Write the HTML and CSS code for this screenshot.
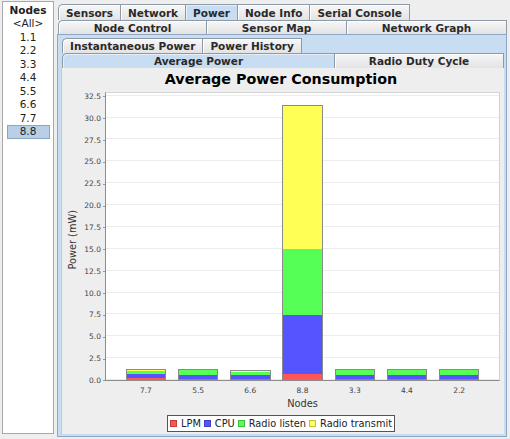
FILE: index.html
```html
<!DOCTYPE html>
<html lang="en">
<head>
<meta charset="utf-8">
<title>Average Power</title>
<link rel="stylesheet" href="styles.css">
</head>
<body>
<div class="app">
  <aside class="nodes">
    <div class="nodes-title">Nodes</div>
    <ul class="node-list">
      <li>&lt;All&gt;</li>
      <li>1.1</li>
      <li>2.2</li>
      <li>3.3</li>
      <li>4.4</li>
      <li>5.5</li>
      <li>6.6</li>
      <li>7.7</li>
      <li class="sel">8.8</li>
    </ul>
  </aside>

  <main class="tabs outer">
    <div class="tab-row r1">
      <div class="tab first">Sensors</div>
      <div class="tab">Network</div>
      <div class="tab sel">Power</div>
      <div class="tab">Node Info</div>
      <div class="tab">Serial Console</div>
    </div>
    <div class="tab-row r2 stretch">
      <div class="tab first">Node Control</div>
      <div class="tab">Sensor Map</div>
      <div class="tab">Network Graph</div>
    </div>

    <div class="outer-content">
      <div class="tab-row ir1">
        <div class="tab first">Instantaneous Power</div>
        <div class="tab">Power History</div>
      </div>
      <div class="tab-row ir2">
        <div class="tab first sel w-avg">Average Power</div>
        <div class="tab grow">Radio Duty Cycle</div>
      </div>

      <section class="chart">
        <h1 class="chart-title">Average Power Consumption</h1>
        <div class="chart-main">
          <div class="y-title"><span>Power (mW)</span></div>
          <div class="y-ticks">
            <span>0.0</span><span>2.5</span><span>5.0</span><span>7.5</span><span>10.0</span>
            <span>12.5</span><span>15.0</span><span>17.5</span><span>20.0</span><span>22.5</span>
            <span>25.0</span><span>27.5</span><span>30.0</span><span>32.5</span>
          </div>
          <div class="plot">
            <div class="bar">
              <i class="lpm" style="--v:0.23"></i><i class="cpu" style="--v:0.46"></i><i class="listen" style="--v:0.29"></i><i class="transmit" style="--v:0.29"></i>
            </div>
            <div class="bar">
              <i class="lpm" style="--v:0.17"></i><i class="cpu" style="--v:0.46"></i><i class="listen" style="--v:0.51"></i><i class="transmit" style="--v:0.11"></i>
            </div>
            <div class="bar">
              <i class="lpm" style="--v:0.17"></i><i class="cpu" style="--v:0.40"></i><i class="listen" style="--v:0.34"></i><i class="transmit" style="--v:0.23"></i>
            </div>
            <div class="bar">
              <i class="lpm" style="--v:0.69"></i><i class="cpu" style="--v:6.75"></i><i class="listen" style="--v:7.55"></i><i class="transmit" style="--v:16.47"></i>
            </div>
            <div class="bar">
              <i class="lpm" style="--v:0.17"></i><i class="cpu" style="--v:0.46"></i><i class="listen" style="--v:0.57"></i><i class="transmit" style="--v:0.06"></i>
            </div>
            <div class="bar">
              <i class="lpm" style="--v:0.17"></i><i class="cpu" style="--v:0.46"></i><i class="listen" style="--v:0.57"></i><i class="transmit" style="--v:0.06"></i>
            </div>
            <div class="bar">
              <i class="lpm" style="--v:0.17"></i><i class="cpu" style="--v:0.46"></i><i class="listen" style="--v:0.57"></i><i class="transmit" style="--v:0.06"></i>
            </div>
          </div>
        </div>
        <div class="x-labels">
          <span>7.7</span><span>5.5</span><span>6.6</span><span>8.8</span><span>3.3</span><span>4.4</span><span>2.2</span>
        </div>
        <div class="x-title">Nodes</div>
        <div class="legend">
          <span class="item"><b class="lpm"></b>LPM</span>
          <span class="item"><b class="cpu"></b>CPU</span>
          <span class="item"><b class="listen"></b>Radio listen</span>
          <span class="item"><b class="transmit"></b>Radio transmit</span>
        </div>
      </section>
    </div>
  </main>
</div>
</body>
</html>
```

FILE: styles.css
```css
* { box-sizing: border-box; margin: 0; padding: 0; }

html, body { width: 510px; height: 439px; overflow: hidden; }

body {
  background: #eeeeee;
  font-family: "DejaVu Sans", "Noto Sans", sans-serif;
  color: #222;
}

.app { display: flex; height: 439px; }

/* ---------- node list ---------- */
.nodes {
  width: 52px;
  margin: 1px 0 5px 2px;
  background: #fff;
  border: 1px solid #a9a9a9;
  display: flex;
  flex-direction: column;
  align-items: center;
}
.nodes-title {
  font-weight: bold;
  font-size: 10.5px;
  line-height: 14px;
  margin-top: 1px;
}
.node-list {
  list-style: none;
  width: 100%;
  display: flex;
  flex-direction: column;
  align-items: center;
}
.node-list li {
  font-size: 10.5px;
  line-height: 13.5px;
  width: 43px;
  text-align: center;
}
.node-list li.sel {
  background: #b8cfe5;
  box-shadow: inset 0 0 0 1px #8ea5c0;
}

/* ---------- tabs ---------- */
.outer {
  flex: 1;
  margin: 4px 3px 2px 3px;
  display: flex;
  flex-direction: column;
}
.tab-row { display: flex; padding-left: 1px; flex: none; }
.r1 { height: 16px; }
.r2 { height: 14px; }
.ir1, .ir2 { height: 15px; }

.tab {
  font-size: 10.5px;
  font-weight: bold;
  color: #2a2a2a;
  padding: 0 7px;
  border: 1px solid #8d9aa7;
  border-bottom: none;
  border-right: none;
  background: linear-gradient(#f7f7f7, #e3e3e3);
  box-shadow: inset 1px 1px 0 #ffffff;
  display: flex;
  align-items: center;
  justify-content: center;
  white-space: nowrap;
}
.tab:last-child { border-right: 1px solid #8d9aa7; }
.tab.first { border-top-left-radius: 5px; }
.tab.sel { background: #c8ddf2; box-shadow: inset 1px 1px 0 #e4effa; }
.stretch .tab { flex: 1 1 auto; }
.w-avg { flex: 0 0 272px; }
.grow { flex: 1 1 auto; }

.outer-content {
  flex: 1;
  background: #c8ddf2;
  border: 1px solid #8fa6c4;
  padding: 3px 2px 2px 3px;
  display: flex;
  flex-direction: column;
  min-height: 0;
}

/* ---------- chart ---------- */
.chart {
  flex: 1;
  background: #eeeeee;
  border-left: 1px solid #b9cbe0;
  display: flex;
  flex-direction: column;
  padding-right: 4px;
}
.chart-title {
  height: 22px;
  line-height: 22px;
  font-size: 14.3px;
  font-weight: bold;
  text-align: center;
  color: #000;
  margin-bottom: 2px;
}
.chart-main { display: flex; height: 289px; flex: none; }

.y-title {
  width: 20px;
  display: flex;
  align-items: center;
  justify-content: center;
  padding-top: 6px;
}
.y-title span {
  writing-mode: vertical-rl;
  transform: rotate(180deg);
  font-size: 9.8px;
  color: #333;
  white-space: nowrap;
}

.y-ticks {
  width: 23px;
  display: flex;
  flex-direction: column-reverse;
}
.y-ticks span {
  flex: none;
  height: 21.865px;
  font-size: 7.5px;
  color: #444;
  display: flex;
  align-items: center;
  justify-content: flex-end;
  padding-right: 4px;
  position: relative;
}
.y-ticks span:first-child { margin-bottom: -10.4px; }
.y-ticks span::after {
  content: "";
  position: absolute;
  right: 0;
  top: 50%;
  width: 2px;
  height: 1px;
  background: #999;
}

.plot {
  flex: 1;
  background-color: #ffffff;
  background-image: repeating-linear-gradient(to top, #ececec 0 1px, transparent 1px 21.865px);
  border-top: 1px solid #d4d4d4;
  border-right: 1px solid #d4d4d4;
  border-left: 1px solid #8c8c8c;
  border-bottom: 1px solid #8c8c8c;
  display: flex;
  align-items: flex-end;
  gap: 11.8px;
  padding: 0 19.7px;
}
.bar {
  flex: 1;
  display: flex;
  flex-direction: column-reverse;
  outline: 1px solid #8a8a8a;
  outline-offset: -1px;
}
.bar i { display: block; height: calc(var(--v) * 8.745px); }

.lpm { background: #ff5555; }
.cpu { background: #5555ff; }
.listen { background: #55ff55; }
.transmit { background: #ffff55; }

.x-labels {
  display: flex;
  gap: 11.8px;
  margin: 4px 0 0 43px;
  padding: 0 20.7px;
  line-height: 12px;
}
.x-labels span {
  flex: 1;
  text-align: center;
  font-size: 7.5px;
  color: #444;
}
.x-title {
  margin-left: 43px;
  text-align: center;
  font-size: 9.8px;
  line-height: 14px;
  color: #333;
}
.legend {
  align-self: center;
  margin-top: 4px;
  height: 17px;
  background: #fff;
  border: 1px solid #555;
  display: flex;
  align-items: center;
  gap: 3px;
  padding: 0 2px;
  font-size: 9.8px;
  color: #222;
}
.legend .item { display: flex; align-items: center; gap: 4px; white-space: nowrap; }
.legend b {
  display: block;
  width: 7px;
  height: 7px;
  box-shadow: inset 0 0 0 1px rgba(0, 0, 0, 0.25);
}
```
